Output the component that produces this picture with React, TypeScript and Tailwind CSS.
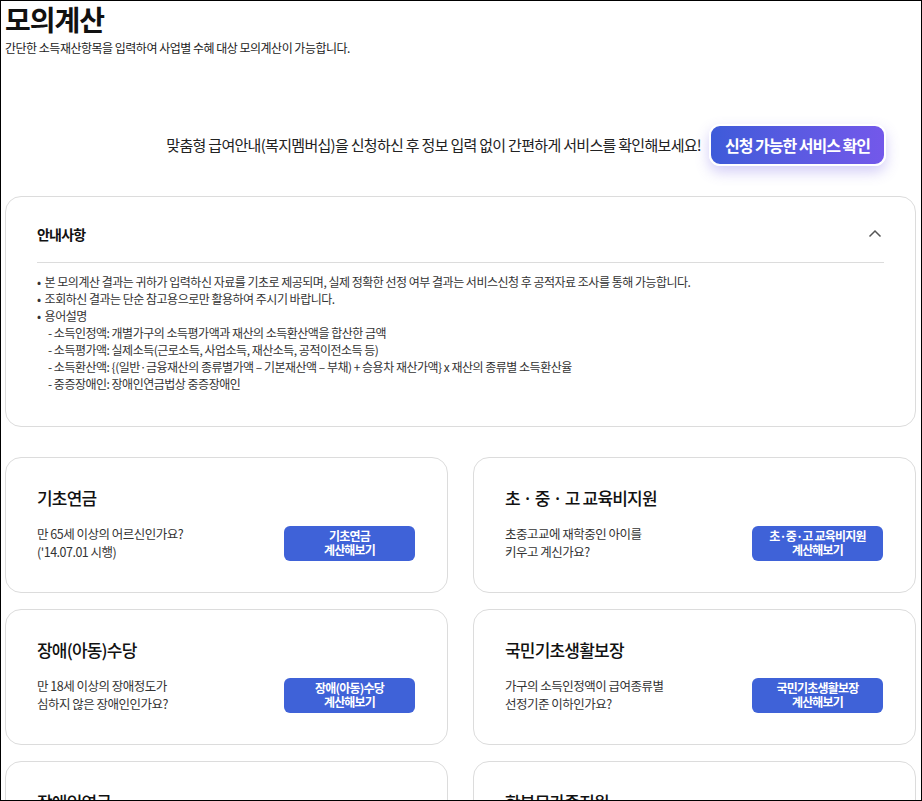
import React from "react";

const FONT = { fontFamily: '"Noto Sans CJK KR", "Noto Sans", sans-serif' };

const notices = [
  { text: "본 모의계산 결과는 귀하가 입력하신 자료를 기초로 제공되며, 실제 정확한 선정 여부 결과는 서비스신청 후 공적자료 조사를 통해 가능합니다.", bullet: true },
  { text: "조회하신 결과는 단순 참고용으로만 활용하여 주시기 바랍니다.", bullet: true },
  { text: "용어설명", bullet: true },
  { text: "- 소득인정액: 개별가구의 소득평가액과 재산의 소득환산액을 합산한 금액" },
  { text: "- 소득평가액: 실제소득(근로소득, 사업소득, 재산소득, 공적이전소득 등)" },
  { text: "- 소득환산액: {(일반·금융재산의 종류별가액 – 기본재산액 – 부채) + 승용차 재산가액} x 재산의 종류별 소득환산율" },
  { text: "- 중증장애인: 장애인연금법상 중증장애인" },
];

const services = [
  { title: "기초연금", desc: ["만 65세 이상의 어르신인가요?", "('14.07.01 시행)"], btn: "기초연금" },
  { title: "초 · 중 · 고 교육비지원", desc: ["초중고교에 재학중인 아이를", "키우고 계신가요?"], btn: "초·중·고 교육비지원" },
  { title: "장애(아동)수당", desc: ["만 18세 이상의 장애정도가", "심하지 않은 장애인인가요?"], btn: "장애(아동)수당" },
  { title: "국민기초생활보장", desc: ["가구의 소득인정액이 급여종류별", "선정기준 이하인가요?"], btn: "국민기초생활보장" },
  { title: "장애인연금", desc: ["만 18세 이상의 중증장애인이신가요?", "\u00a0"], btn: "장애인연금" },
  { title: "한부모가족지원", desc: ["한부모가족이신가요?", "\u00a0"], btn: "한부모가족지원" },
];

function ServiceCard({ title, desc, btn }: { title: string; desc: string[]; btn: string }) {
  return (
    <div className="rounded-2xl border border-[#dcdcdc] bg-white pl-[31px] pr-[32px] pt-[29px] pb-[31px]">
      <h3 className="text-[17px] leading-[22px] font-medium tracking-[-0.8px] text-[#111]">{title}</h3>
      <div className="mt-[16px] flex items-center justify-between">
        <p className="text-[12.5px] leading-[18px] tracking-[-0.5px] text-[#333]">
          {desc[0]}
          <br />
          {desc[1]}
        </p>
        <button className="flex h-[35px] w-[131px] shrink-0 flex-col items-center justify-center rounded-md bg-[#3f62d8] text-[12px] leading-[14px] font-bold tracking-[-0.8px] text-white">
          <span>{btn}</span>
          <span>계산해보기</span>
        </button>
      </div>
    </div>
  );
}

export default function App() {
  return (
    <div style={FONT} className="h-[801px] w-[922px] overflow-hidden border border-black bg-white pl-[4px] pr-[5px] text-[#111]">
      {/* Header */}
      <h1 className="pt-px text-[28px] leading-[34px] font-bold tracking-[-1px]">모의계산</h1>
      <p className="mt-[4px] text-[12px] leading-[16px] tracking-[-0.5px] text-[#222]">
        간단한 소득재산항목을 입력하여 사업별 수혜 대상 모의계산이 가능합니다.
      </p>

      {/* Membership CTA */}
      <div className="mt-[68px] flex items-center justify-end gap-[8px] pr-[30px]">
        <p className="text-[15px] tracking-[-0.7px] text-[#222]">
          맞춤형 급여안내(복지멤버십)을 신청하신 후 정보 입력 없이 간편하게 서비스를 확인해보세요!
        </p>
        <button className="h-[42px] w-[177px] rounded-[11px] border-2 border-white bg-gradient-to-r from-[#3d5bd9] to-[#7358ea] text-[16px] font-bold tracking-[-1px] text-white shadow-[0_6px_14px_rgba(110,90,230,0.3)]">
          신청 가능한 서비스 확인
        </button>
      </div>

      {/* Notice */}
      <section className="mt-[30px] rounded-2xl border border-[#dcdcdc] px-[31px] pt-[26px] pb-[34px]">
        <div className="flex h-[22px] items-center justify-between">
          <h2 className="text-[14px] font-bold tracking-[-0.8px]">안내사항</h2>
          <svg width="14" height="14" viewBox="0 0 14 14" className="mr-[2px]">
            <polyline points="1.5,9.5 7,4 12.5,9.5" fill="none" stroke="#555" strokeWidth="1.5" />
          </svg>
        </div>
        <div className="mt-[17px] h-px bg-[#dcdcdc]" />
        <ul className="mt-[10px] text-[12px] leading-[17px] tracking-[-0.5px] text-[#333]">
          {notices.map((n, i) => (
            <li key={i} className={n.bullet ? "flex" : "pl-[11px]"}>
              {n.bullet && <span className="mr-[4px]">•</span>}
              <span>{n.text}</span>
            </li>
          ))}
        </ul>
      </section>

      {/* Services */}
      <div className="mt-[30px] grid grid-cols-2 gap-x-[25px] gap-y-[16px]">
        {services.map((s) => (
          <ServiceCard key={s.title} {...s} />
        ))}
      </div>
    </div>
  );
}
